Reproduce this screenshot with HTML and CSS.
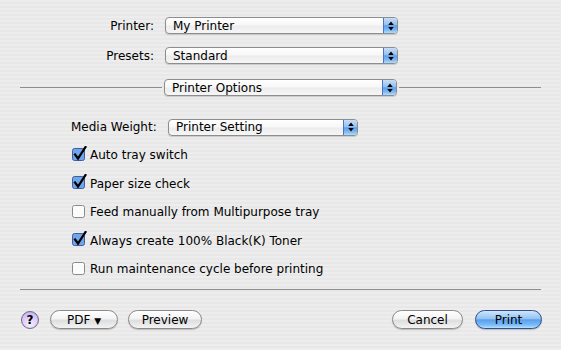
FILE: index.html
```html
<!DOCTYPE html>
<html lang="en">
<head>
    <meta charset="UTF-8">
    <title>Print</title>
    <link rel="stylesheet" href="styles.css">
</head>
<body>

<div class="dialog">
    <!-- Printer and presets -->
    <div class="fields">
        <span class="label">Printer:</span>
        <div class="popup">
            <span class="value">My Printer</span>
            <span class="stepper"><svg width="6" height="10" viewBox="0 0 6 10"><path d="M3 0.5 L5.8 4 L0.2 4 Z M0.2 6 L5.8 6 L3 9.5 Z" fill="#000"/></svg></span>
        </div>
        <span class="label">Presets:</span>
        <div class="popup">
            <span class="value">Standard</span>
            <span class="stepper"><svg width="6" height="10" viewBox="0 0 6 10"><path d="M3 0.5 L5.8 4 L0.2 4 Z M0.2 6 L5.8 6 L3 9.5 Z" fill="#000"/></svg></span>
        </div>
    </div>

    <!-- Pane chooser -->
    <div class="pane-row">
        <div class="rule"></div>
        <div class="popup pane">
            <span class="value">Printer Options</span>
            <span class="stepper"><svg width="6" height="10" viewBox="0 0 6 10"><path d="M3 0.5 L5.8 4 L0.2 4 Z M0.2 6 L5.8 6 L3 9.5 Z" fill="#000"/></svg></span>
        </div>
        <div class="rule"></div>
    </div>

    <!-- Printer options -->
    <div class="options">
        <div class="media-row">
            <span class="media-label">Media Weight:</span>
            <div class="popup media">
                <span class="value">Printer Setting</span>
                <span class="stepper"><svg width="6" height="10" viewBox="0 0 6 10"><path d="M3 0.5 L5.8 4 L0.2 4 Z M0.2 6 L5.8 6 L3 9.5 Z" fill="#000"/></svg></span>
            </div>
        </div>
        <label class="check-row">
            <svg class="box" width="15" height="16" viewBox="0 0 15 16"><rect x="0.5" y="2.5" width="12" height="12" rx="2" class="on"/><path d="M3 8.5 L6 12.5 L13.5 1" class="tick"/></svg>
            <span>Auto tray switch</span>
        </label>
        <label class="check-row">
            <svg class="box" width="15" height="16" viewBox="0 0 15 16"><rect x="0.5" y="2.5" width="12" height="12" rx="2" class="on"/><path d="M3 8.5 L6 12.5 L13.5 1" class="tick"/></svg>
            <span>Paper size check</span>
        </label>
        <label class="check-row">
            <svg class="box" width="15" height="16" viewBox="0 0 15 16"><rect x="0.5" y="2.5" width="12" height="12" rx="2" class="off"/></svg>
            <span>Feed manually from Multipurpose tray</span>
        </label>
        <label class="check-row">
            <svg class="box" width="15" height="16" viewBox="0 0 15 16"><rect x="0.5" y="2.5" width="12" height="12" rx="2" class="on"/><path d="M3 8.5 L6 12.5 L13.5 1" class="tick"/></svg>
            <span>Always create 100% Black(K) Toner</span>
        </label>
        <label class="check-row">
            <svg class="box" width="15" height="16" viewBox="0 0 15 16"><rect x="0.5" y="2.5" width="12" height="12" rx="2" class="off"/></svg>
            <span>Run maintenance cycle before printing</span>
        </label>
    </div>

    <div class="bottom-rule"></div>

    <!-- Buttons -->
    <div class="buttons">
        <button class="help">?</button>
        <button class="btn pdf">PDF <span class="arrow">▼</span></button>
        <button class="btn preview">Preview</button>
        <div class="spacer"></div>
        <button class="btn cancel">Cancel</button>
        <button class="btn print">Print</button>
    </div>
</div>

</body>
</html>
```

FILE: styles.css
```css
body {
    margin: 0;
    font-family: "DejaVu Sans", Verdana, sans-serif;
    font-size: 12px;
    color: #000;
}
.dialog {
    width: 561px;
    height: 350px;
    box-sizing: border-box;
    padding-top: 17px;
    background: repeating-linear-gradient(to bottom, #ededed 0, #ededed 2px, #e8e8e8 2px, #e8e8e8 4px);
}
.fields {
    display: grid;
    grid-template-columns: 154px 233px;
    column-gap: 11px;
    row-gap: 13px;
    align-items: center;
}
.label {
    text-align: right;
}
.popup {
    display: flex;
    align-items: center;
    height: 17px;
    box-sizing: border-box;
    border: 1px solid #8d8d8d;
    border-radius: 4px;
    background: linear-gradient(to bottom, #ffffff 0%, #f7f7f7 45%, #ececec 55%, #f6f6f6 100%);
    box-shadow: 0 1px 1px rgba(0, 0, 0, 0.15);
    overflow: hidden;
}
.popup .value {
    flex: 1;
    padding-left: 7px;
    white-space: nowrap;
}
.stepper {
    width: 13px;
    align-self: stretch;
    display: flex;
    align-items: center;
    justify-content: center;
    border-left: 1px solid #4a74c4;
    background: linear-gradient(to bottom, #c8def7 0%, #93c0f1 45%, #5f9fe8 52%, #7cbaf5 80%, #b4dcfc 100%);
}
.pane-row {
    display: flex;
    align-items: center;
    margin-top: 15px;
    padding: 0 20px;
}
.rule {
    flex: 1;
    height: 1px;
    background: #8e8e8e;
}
.pane {
    width: 233px;
    margin: 0 2px;
}
.options {
    margin-top: 17px;
    padding-left: 71px;
}
.media-row {
    display: flex;
    align-items: center;
    height: 28px;
}
.media-label {
    width: 97px;
}
.media {
    width: 190px;
}
.check-row {
    display: flex;
    align-items: center;
    height: 28.5px;
    gap: 3px;
}
.box {
    margin-left: 1px;
    margin-top: -3px;
}
.box .on {
    fill: #6fa6ea;
    stroke: #3e5f9e;
    stroke-width: 1;
}
.box .off {
    fill: #fbfbfb;
    stroke: #8a8a8a;
    stroke-width: 1;
}
.box .tick {
    fill: none;
    stroke: #000;
    stroke-width: 2.2;
    stroke-linecap: square;
}
.bottom-rule {
    height: 1px;
    margin: 5px 20px 0;
    background: #8e8e8e;
}
.buttons {
    display: flex;
    align-items: center;
    height: 20px;
    margin-top: 20px;
    padding: 0 19px 0 21px;
}
.spacer {
    flex: 1;
}
button {
    font-family: "DejaVu Sans", Verdana, sans-serif;
    font-size: 12px;
    color: #000;
    padding: 0;
}
.help {
    width: 18px;
    height: 18px;
    margin-right: 11px;
    border: 1px solid #6e6a86;
    border-radius: 50%;
    font-weight: bold;
    font-size: 12px;
    background: radial-gradient(circle at 50% 75%, #f6f0ff 0%, #d9caf8 55%, #b9a6ec 100%);
}
.btn {
    height: 19px;
    border: 1px solid #8a8a8a;
    border-radius: 10px;
    background: linear-gradient(to bottom, #ffffff 0%, #f3f3f3 45%, #dedede 55%, #f3f3f3 100%);
    box-shadow: 0 1px 1px rgba(0, 0, 0, 0.2);
}
.pdf {
    width: 68px;
}
.pdf .arrow {
    font-size: 9px;
}
.preview {
    width: 74px;
    margin-left: 10px;
}
.cancel {
    width: 71px;
}
.print {
    width: 67px;
    margin-left: 12px;
    border-color: #2f4f91;
    background: linear-gradient(to bottom, #cfe5fb 0%, #92c3f4 45%, #5a9eeb 52%, #79bcf7 82%, #b6e2ff 100%);
}
```
